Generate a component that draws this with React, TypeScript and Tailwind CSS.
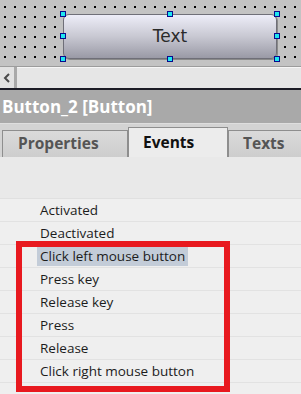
import React from "react";

const events = [
  "Activated",
  "Deactivated",
  "Click left mouse button",
  "Press key",
  "Release key",
  "Press",
  "Release",
  "Click right mouse button",
];

function Handle({ x, y }: { x: number; y: number }) {
  return (
    <div
      className="absolute w-[6px] h-[6px] bg-[#1ee6f0] border border-[#0a0a8c]"
      style={{ left: x - 3, top: y - 3 }}
    />
  );
}

export default function App() {
  return (
    <div className="w-[301px] h-[394px] overflow-hidden flex flex-col bg-[#efefef] relative font-['Open_Sans',sans-serif]">
      {/* canvas */}
      <div className="relative h-[66px] shrink-0 bg-[#c3c3c3] bg-[radial-gradient(circle,#000_0.8px,transparent_1px)] bg-[length:10px_10px] bg-[position:0px_2px]">
        <div className="absolute left-[63px] top-[14px] w-[214px] h-[45px] rounded-[6px] border border-[#6f6f78] bg-[linear-gradient(#ededf8,#c8c8d2_50%,#9a9aa6)] flex items-center justify-center shadow-[1px_1px_0_#8a8a8a]">
          <span className="text-[17px] text-[#2a2a2a] font-['DejaVu_Sans',sans-serif] leading-none">Text</span>
        </div>
        <Handle x={63} y={14} />
        <Handle x={170} y={14} />
        <Handle x={277} y={14} />
        <Handle x={63} y={36} />
        <Handle x={277} y={36} />
        <Handle x={63} y={59} />
        <Handle x={170} y={59} />
        <Handle x={277} y={59} />
      </div>
      {/* scrollbar */}
      <div className="h-[22px] shrink-0 flex border-t border-[#9c9c9c]">
        <div className="w-[14px] bg-[#e2e2e2] flex items-center justify-center">
          <svg width="8" height="10" viewBox="0 0 8 10">
            <path d="M6 1 L2 5 L6 9" stroke="#4a4a4a" strokeWidth="2" fill="none" />
          </svg>
        </div>
        <div className="w-[3px] bg-[#a9a9a9]" />
        <div className="flex-1 bg-[#e6e6e6] border-t border-[#f6f6f6]" />
      </div>
      <div className="h-[2px] shrink-0 bg-[#1c1c26]" />
      {/* header */}
      <div className="h-[33px] shrink-0 bg-[#a9a9a9] flex items-center pl-[2px] pb-[1px]">
        <span className="text-white font-bold text-[17px] leading-none">Button_2 [Button]</span>
      </div>
      {/* tab strip */}
      <div className="h-[34px] shrink-0 bg-[#d3d3d3] border-t border-[#dedede] flex items-end pl-[2px]">
        <div className="w-[126px] h-[27px] border border-[#8e8e8e] border-b-0 bg-[linear-gradient(#dadada,#cdcdcd)] flex items-center pl-[15px]">
          <span className="font-bold text-[15.5px] text-[#555] leading-none pb-[1px]">Properties</span>
        </div>
        <div className="w-[100px] h-[30px] border border-[#8e8e8e] border-b-0 bg-[#ececec] flex items-center pl-[14px]">
          <span className="font-bold text-[15.5px] text-[#111] leading-none pt-[1px]">Events</span>
        </div>
        <div className="flex-1 h-[27px] border border-[#8e8e8e] border-b-0 border-r-0 bg-[linear-gradient(#dadada,#cdcdcd)] flex items-center pl-[14px]">
          <span className="font-bold text-[15.5px] text-[#555] leading-none pb-[1px]">Texts</span>
        </div>
      </div>
      {/* empty area */}
      <div className="h-[42px] shrink-0 bg-[#e9e9e9] border-b border-[#e0e0e0]" />
      {/* rows */}
      <div className="flex flex-col">
        {events.map((e, i) => (
          <div key={e} className="h-[23px] shrink-0 border-b border-[#e2e2e2] flex items-center pl-[37px]">
            <span
              className={
                "text-[13.5px] text-[#1c1c1c] leading-[20px] px-[3px] " +
                (i === 2 ? "bg-[#c3ccd8]" : "")
              }
            >
              {e}
            </span>
          </div>
        ))}
      </div>
      {/* red highlight box */}
      <div className="absolute left-[16px] top-[241px] w-[214px] h-[151px] border-[6px] border-[#e8191f] pointer-events-none" />
    </div>
  );
}
